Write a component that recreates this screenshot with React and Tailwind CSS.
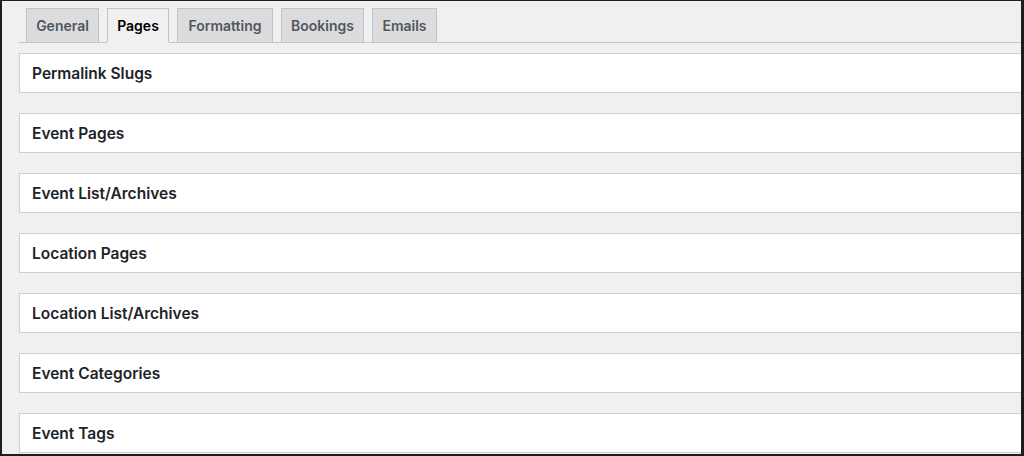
import React from 'react';

const tabs = [
  { label: 'General', w: 'w-[73px]' },
  { label: 'Pages', w: 'w-[62px]', active: true },
  { label: 'Formatting', w: 'w-[96px]' },
  { label: 'Bookings', w: 'w-[83px]' },
  { label: 'Emails', w: 'w-[65px]' },
];

const sections = [
  'Permalink Slugs',
  'Event Pages',
  'Event List/Archives',
  'Location Pages',
  'Location List/Archives',
  'Event Categories',
  'Event Tags',
];

export default function App() {
  return (
    <div
      className="w-[1024px] h-[456px] overflow-hidden bg-[#1d1d1d] pt-px pl-[2px] pr-[3px] pb-[2px]"
      style={{ fontFamily: 'Inter, "Liberation Sans", Arial, sans-serif' }}
    >
      <div className="h-full bg-[#f0f0f1] pl-[17px] pt-[7px] overflow-hidden">
        {/* tabs */}
        <div className="flex gap-2 pl-[7px] border-b border-[#c3c4c7] w-[1100px]">
          {tabs.map((t) => (
            <div
              key={t.label}
              className={`${t.w} h-[35px] -mb-px flex items-center justify-center text-[14px] font-semibold border border-[#c3c4c7] ${
                t.active
                  ? 'bg-[#f0f0f1] text-black border-b-[#f0f0f1]'
                  : 'bg-[#dcdcde] text-[#50575e]'
              }`}
            >
              {t.label}
            </div>
          ))}
        </div>

        {/* postboxes */}
        <div className="pt-[10px] flex flex-col gap-5">
          {sections.map((s) => (
            <div
              key={s}
              className="w-[1100px] h-[40px] shrink-0 bg-white border border-[#ccd0d4] flex items-center pl-[12px] pt-[2px]"
            >
              <span className="text-[15.5px] font-semibold text-[#1d2327]">{s}</span>
            </div>
          ))}
        </div>
      </div>
    </div>
  );
}
